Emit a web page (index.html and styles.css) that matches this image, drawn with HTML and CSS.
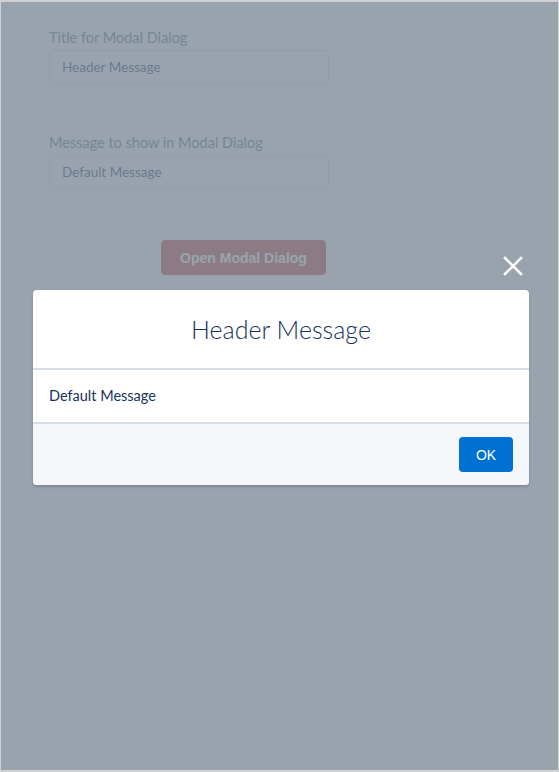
FILE: index.html
```html
<!DOCTYPE html>
<html lang="en">
<head>
<meta charset="utf-8">
<title>Modal Dialog</title>
<link rel="stylesheet" href="styles.css">
</head>
<body>
<div class="frame">
  <div class="form">
    <label class="label">Title for Modal Dialog</label>
    <div class="input">Header Message</div>
    <label class="label label-second">Message to show in Modal Dialog</label>
    <div class="input">Default Message</div>
    <button class="open-btn">Open Modal Dialog</button>
  </div>

  <div class="backdrop"></div>

  <div class="modal-wrap">
    <div class="modal">
      <button class="close-btn" aria-label="Close">
        <svg width="20" height="20" viewBox="0 0 20 20"><path d="M2 2 L18 18 M18 2 L2 18" stroke="#fff" stroke-width="2.6" stroke-linecap="square" fill="none"/></svg>
      </button>
      <div class="modal-header">Header Message</div>
      <div class="modal-content">Default Message</div>
      <div class="modal-footer"><button class="ok-btn">OK</button></div>
    </div>
  </div>
</div>
</body>
</html>
```

FILE: styles.css
```css
html, body {
  margin: 0;
  padding: 0;
  background: #fff;
}

.frame {
  position: relative;
  box-sizing: border-box;
  width: 559px;
  height: 772px;
  border-style: solid;
  border-color: #cfd1d3;
  border-width: 2px 1px 2px 1px;
  background: #fff;
  overflow: hidden;
  font-family: Lato, "Open Sans", sans-serif;
}

.form {
  display: flex;
  flex-direction: column;
  align-items: flex-start;
  padding: 27px 0 0 48px;
}

.label {
  font-size: 14.5px;
  line-height: 18px;
  color: #54698d;
  margin-bottom: 3px;
}

.label-second {
  margin-top: 50px;
}

.input {
  box-sizing: border-box;
  width: 280px;
  height: 34px;
  border: 1px solid #d8dde6;
  border-radius: 4px;
  padding: 0 12px;
  font-size: 13.5px;
  line-height: 32px;
  color: #16325c;
  background: #fff;
}

.open-btn {
  margin: 51px 0 0 112px;
  box-sizing: border-box;
  width: 165px;
  height: 35px;
  border: 1px solid #c23934;
  border-radius: 4px;
  background: #c23934;
  color: #fff;
  font-family: "Liberation Sans", Arial, sans-serif;
  font-weight: bold;
  font-size: 14px;
  padding: 0;
}

.backdrop {
  position: absolute;
  inset: 0;
  background: rgba(126, 140, 153, 0.8);
}

.modal-wrap {
  position: absolute;
  left: 32px;
  right: 29px;
  top: 288px;
}

.modal {
  position: relative;
  background: #fff;
  border-radius: 4px;
  box-shadow: 0 2px 3px rgba(0, 0, 0, 0.16);
}

.close-btn {
  position: absolute;
  right: 0;
  top: -40px;
  width: 32px;
  height: 32px;
  padding: 0;
  border: 0;
  background: transparent;
  display: flex;
  align-items: center;
  justify-content: center;
}

.modal-header {
  box-sizing: border-box;
  height: 80px;
  border-bottom: 2px solid #d8dde6;
  text-align: center;
  font-weight: 300;
  font-size: 25px;
  line-height: 78px;
  color: #16325c;
}

.modal-content {
  box-sizing: border-box;
  height: 54px;
  border-bottom: 2px solid #d8dde6;
  padding: 0 16px;
  font-size: 14.5px;
  line-height: 52px;
  color: #16325c;
}

.modal-footer {
  display: flex;
  justify-content: flex-end;
  padding: 13px 16px 13px 16px;
  background: #f4f6f9;
  border-radius: 0 0 4px 4px;
}

.ok-btn {
  box-sizing: border-box;
  width: 54px;
  height: 35px;
  border: 0;
  border-radius: 4px;
  background: #0070d2;
  color: #fff;
  font-family: "Liberation Sans", Arial, sans-serif;
  font-size: 14px;
  padding: 0;
}
```
